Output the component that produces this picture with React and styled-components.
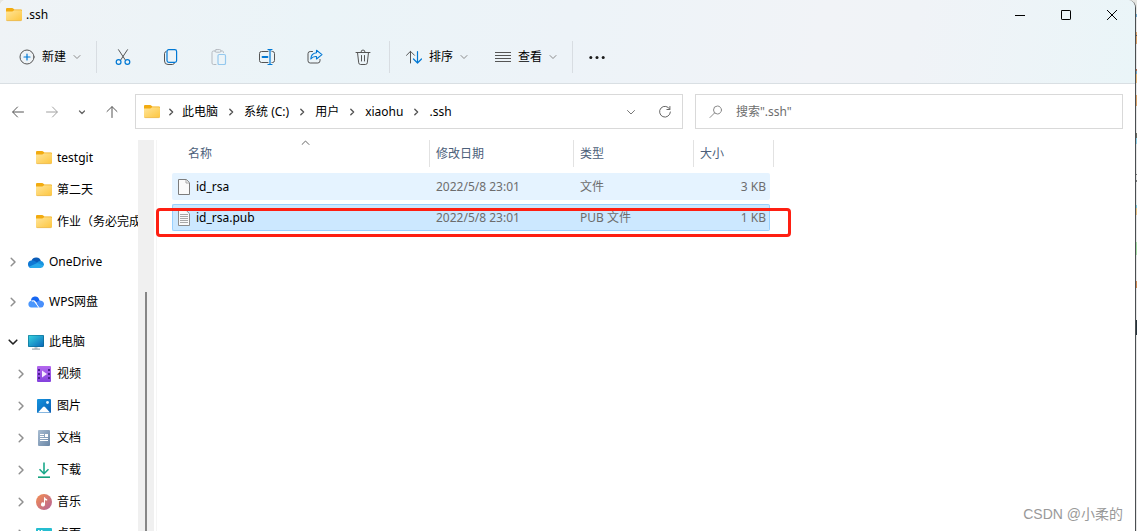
import React from 'react';
import styled, { createGlobalStyle, css, ThemeProvider } from 'styled-components';

const theme = {
  accent: '#0078d4',
  text: '#000000',
  muted: '#6d6d6d',
  header: '#4c607a',
  line: '#d9d9d9',
  hover: '#e5f3ff',
  selected: '#cce8ff',
  selectedLine: '#99d1ff',
  mark: '#fe1f12',
};

const GlobalStyle = createGlobalStyle`
    *, *::before, *::after {
        box-sizing: border-box;
    }

    body {
        margin: 0;
        overflow: hidden;
        font-family: 'Noto Sans', 'Noto Sans CJK SC', sans-serif;
        font-size: 12px;
        line-height: 16px;
    }

    button, input {
        font: inherit;
        color: inherit;
    }

    svg {
        flex: none;
    }
`;

const Desktop = styled.div`
    height: 100vh;
    padding-right: 1px;
    background: linear-gradient(
        #e6e6e2 0 14px, #6fa8cc 14px 17px, #e6e6e6 17px 32px, #d9a066 32px 35px,
        #5a5a5a 35px 36px, #d9a066 36px 44px, #e6e6e6 44px 69px, #b06a50 69px 71px,
        #6fa8cc 71px 74px, #e8b878 74px 83px, #e6e6e6 83px 95px, #d9a066 95px 106px,
        #e6e6e6 106px 133px, #6a6a60 133px 138px, #8ccfe8 138px 144px, #e6e6e6 144px 174px,
        #777777 174px 175px, #e6e6e6 175px 180px, #777777 180px 182px, #e6e6e6 182px 205px,
        #7cc8d8 205px 208px, #e8c080 208px 215px, #e6e6e6 215px 242px, #a4dca4 242px 255px,
        #e6e6e6 255px 281px, #d08850 281px 288px, #e6e6e6 288px 320px, #26323a 320px 335px,
        #e6e6e6 335px
    );
`;

const Window = styled.div`
    position: relative;
    display: flex;
    flex-direction: column;
    height: 100%;
    overflow: hidden;
    background: white;
    border-right: 1px solid #4b4f52;
    border-radius: 6px 8px 0 0;
    color: ${({theme}) => theme.text};
`;

const Header = styled.header`
    flex: none;
    background: linear-gradient(100deg, #eff3f6 0%, #ebf4f8 28%, #edf3f8 50%, #f1f3f7 72%, #f0f3f7 80%, #eaf5f8 100%);
    border-bottom: 1px solid #d9dfe3;
`;

const TitleBar = styled.div`
    display: flex;
    align-items: center;
    height: 29px;
    padding-left: 6px;
`;

const Title = styled.h1`
    flex: 1;
    margin: 0 0 0 4px;
    font-size: 12px;
    font-weight: 400;
`;

const BareButton = styled.button`
    display: flex;
    align-items: center;
    justify-content: center;
    padding: 0;
    border: 0;
    background: none;
`;

const WindowButton = styled(BareButton)`
    width: 46px;
    height: 29px;
`;

const Toolbar = styled.div`
    display: flex;
    align-items: center;
    height: 54px;
    padding: 2px 0 0 5px;
`;

const LabelButton = styled(BareButton)`
    gap: 7px;
    height: 32px;
    padding: 0 13px 0 14px;
`;

const IconButton = styled(BareButton)`
    width: ${({narrow}) => narrow ? '44px' : '48px'};
    height: 32px;
`;

const Divider = styled.span`
    width: 1px;
    height: 32px;
    margin: 0 2px;
    background: #d8dde2;
`;

const NavBar = styled.nav`
    display: flex;
    flex: none;
    padding: 10px 12px 10px 1px;
`;

const NavButton = styled(BareButton)`
    width: ${({small}) => small ? '26px' : '34px'};
    height: 35px;
`;

const Fields = styled.div`
    display: grid;
    flex: 1;
    grid-template-columns: minmax(0, 1.28fr) minmax(0, 1fr);
    gap: 12px;
    margin-left: 6px;
`;

const field = css`
    display: flex;
    align-items: center;
    height: 35px;
    border: 1px solid ${({theme}) => theme.line};
`;

const AddressBar = styled.div`
    ${field}
    padding-left: 8px;
`;

const FieldButton = styled(BareButton)`
    width: 34px;
    height: 33px;
`;

const Crumbs = styled.ol`
    display: flex;
    flex: 1;
    margin: 0;
    padding: 0;
    overflow: hidden;
    list-style: none;
    white-space: nowrap;
`;

const Crumb = styled.li`
    display: flex;
    align-items: center;

    svg {
        width: 26px;
    }

    &:first-child svg {
        width: 22px;
    }

    a {
        color: inherit;
        text-decoration: none;
    }
`;

const SearchBox = styled.label`
    ${field}
    gap: 13px;
    padding-left: 13px;
`;

const SearchInput = styled.input`
    flex: 1;
    min-width: 0;
    padding: 0;
    border: 0;
    outline: 0;
    background: none;

    &::placeholder {
        color: ${({theme}) => theme.muted};
        opacity: 1;
    }
`;

const Body = styled.div`
    display: flex;
    flex: 1;
    min-height: 0;
    padding-top: 1px;
`;

const Sidebar = styled.aside`
    display: flex;
    flex: 0 0 154px;
    overflow: hidden;
`;

const Tree = styled.ul`
    flex: 1;
    min-width: 0;
    margin: 0;
    padding: 2px 0 0;
    overflow: hidden;
    list-style: none;
`;

const TreeItem = styled.li`
    margin-top: ${({spaced}) => spaced ? '8px' : '0'};
`;

const TreeLink = styled.a`
    display: flex;
    align-items: center;
    height: 32px;
    padding-left: ${({nested}) => nested ? '12px' : '4px'};
    color: inherit;
    text-decoration: none;
    white-space: nowrap;
`;

const TreeArrow = styled.span`
    display: flex;
    flex: none;
    justify-content: center;
    width: 17px;
    margin-right: 7px;
`;

const TreeLabel = styled.span`
    margin-left: 5px;
`;

const ScrollTrack = styled.div`
    flex: none;
    width: 16px;
    padding: 152px 7px 0;
    background: #f0f0f0;
`;

const ScrollThumb = styled.div`
    width: 2px;
    height: 100%;
    background: #868686;
`;

const Content = styled.main`
    flex: 1;
    margin-left: 2px;
    border-left: 1px solid #f5f5f5;
`;

const TableArea = styled.div`
    position: relative;
    width: max-content;
    margin: -4px 0 0 15px;
`;

const FileTable = styled.table`
    width: 602px;
    table-layout: fixed;
    border-spacing: 0 4px;
`;

const HeadCell = styled.th`
    position: relative;
    padding: 0 0 2px;
    color: ${({theme}) => theme.header};
    font-weight: 400;
    text-align: left;
`;

const HeadLabel = styled.div`
    height: 27px;
    padding: 6px 0 0 ${({first}) => first ? '16px' : '6px'};
    border-right: 1px solid #e2e2e2;
`;

const SortMark = styled.span`
    position: absolute;
    top: 0;
    left: 50%;
    display: flex;
`;

const Cell = styled.td`
    height: 27px;
    padding: 0 4px 0 6px;
    border: 1px solid transparent;
    border-width: 1px 0;
    background: ${({theme}) => theme.hover};
    color: ${({theme}) => theme.muted};
    text-align: ${({right}) => right ? 'right' : 'left'};

    &:first-child {
        border-left-width: 1px;
        border-radius: 2px 0 0 2px;
        padding-left: 5px;
        color: ${({theme}) => theme.text};
    }

    &:last-child {
        border-right-width: 1px;
        border-radius: 0 2px 2px 0;
        padding-right: 3px;
    }

    ${({selected}) =>
        selected && css`
            background: ${({theme}) => theme.selected};
            border-color: ${({theme}) => theme.selectedLine};
        `}
`;

const FileName = styled.span`
    display: flex;
    align-items: center;
    gap: 6px;
`;

const Highlight = styled.div`
    position: absolute;
    top: 72px;
    left: -16px;
    right: -17px;
    height: 29px;
    border: 3px solid ${({theme}) => theme.mark};
    border-radius: 4px;
    pointer-events: none;
`;

const Watermark = styled.span`
    position: absolute;
    right: 12px;
    bottom: 7px;
    color: #999999;
    font-family: 'Liberation Sans', 'Noto Sans CJK SC', sans-serif;
    font-size: 14px;
    line-height: 20px;
`;

const Line = ({ size = 16, width = size, color = '#555', children, ...rest }) => (
    <svg width={width} height={size} viewBox={`0 0 ${width} ${size}`} fill="none" stroke={color}
        strokeLinecap="round" strokeLinejoin="round" aria-hidden="true" {...rest}>
        {children}
    </svg>
);

const ChevronDown = ({ color = '#8a8a8a', weight = 1 }) => (
    <Line size={8} color={color} strokeWidth={weight}><path d="M1 2.5 4 5.5 7 2.5"/></Line>
);

const ChevronRight = ({ color = '#909090', weight = 1.5 }) => (
    <Line size={10} color={color} strokeWidth={weight}><path d="M3.2 1.2 7 5 3.2 8.8"/></Line>
);

const CrumbArrow = () => (
    <Line size={8} color="#555" strokeWidth="1.4"><path d="M2.8 1.2 5.6 4 2.8 6.8"/></Line>
);

const Folder = () => (
    <svg width="16" height="14" viewBox="0 0 16 14" aria-hidden="true">
        <defs>
            <linearGradient id="folder" x1="0" y1="0" x2="1" y2="1">
                <stop offset="0" stopColor="#ffe59a"/>
                <stop offset="1" stopColor="#fdc63f"/>
            </linearGradient>
        </defs>
        <path d="M0 1Q0 0 1 0h5.200q.6 0 1 .5L8.400 1.500H15q1 0 1 1V6H0z" fill="#f2ab10"/>
        <path d="M0 3.500h6.200q.6 0 1-.4l.8-.8h7q1 0 1 1v8.200q0 1-1 1H1q-1 0-1-1z" fill="url(#folder)"/>
        <path d="M.3 12.200q.3.400.8.400h13.800q.5 0 .8-.4" stroke="#e9ac28" strokeWidth=".7" fill="none"/>
    </svg>
);

const OneDrive = () => (
    <svg width="16" height="11" viewBox="0 0 16 11" aria-hidden="true">
        <path d="M3.500 3.600A5 5 0 0 1 13 4.200L9 8z" fill="#0a5cb8"/>
        <path d="M3.600 3.400a3.700 3.700 0 0 1 3 .6l5.800 3.400L4 11A3.800 3.800 0 0 1 3.600 3.400z" fill="#0f78d4"/>
        <path d="M9 5.600a3.900 3.900 0 0 1 4-1.500 3.500 3.500 0 0 1 2.800 4.500l-4 .4z" fill="#1793e0"/>
        <path d="M1 9.700 9.200 5.900l6.600 2.700A3.300 3.300 0 0 1 12.700 11H4A3.800 3.800 0 0 1 1 9.700z" fill="#28a8ea"/>
    </svg>
);

const WpsCloud = () => (
    <svg width="16" height="12" viewBox="0 0 16 12" aria-hidden="true">
        <path d="M3 4.600A4.200 4.200 0 0 1 11.200 3.500L12 5.500 9.500 7.600 6.600 4.400z" fill="#1767f2"/>
        <path d="M3.200 4.700Q5.200 4.100 6.400 5.800L10.500 11.600H3.400A3.500 3.500 0 0 1 3.200 4.700z" fill="#4a96fc"/>
        <path d="M9.600 5.300q2.200-1.500 4.400-.3a3.500 3.500 0 0 1-.8 6.600H11L8.400 8z" fill="#4a90fb"/>
        <path d="M3.800 5.200Q5.600 4.300 7 6L10.800 11.400" fill="none" stroke="#ffffff" strokeWidth=".9"/>
    </svg>
);

const Computer = () => (
    <svg width="16" height="16" viewBox="0 0 16 16" aria-hidden="true">
        <defs>
            <linearGradient id="screen" x1="0" y1="0" x2="1" y2="1">
                <stop offset="0" stopColor="#36d3df"/>
                <stop offset="1" stopColor="#0b67ba"/>
            </linearGradient>
        </defs>
        <path d="M6.500 12h3v3h-3z" fill="#c3cad0"/>
        <path d="M4 14.600h8v1H4z" fill="#8d989f"/>
        <rect y="1" width="16" height="12" rx="1" fill="#0a6789"/>
        <rect x=".6" y="1.600" width="14.800" height="10.800" rx=".5" fill="url(#screen)"/>
    </svg>
);

const Video = () => (
    <svg width="16" height="16" viewBox="0 0 16 16" aria-hidden="true">
        <defs>
            <linearGradient id="video" x1="0" y1="0" x2="0" y2="1">
                <stop offset="0" stopColor="#b468ee"/>
                <stop offset="1" stopColor="#8341dd"/>
            </linearGradient>
        </defs>
        <rect x="1" width="14" height="16" rx="1" fill="url(#video)"/>
        <path d="M2 3h2v2H2zM2 7h2v2H2zM2 11h2v2H2zM12 3h2v2h-2zM12 7h2v2h-2zM12 11h2v2h-2z" fill="#4b2190"/>
        <path d="M6 4.500v7l5-3.500z" fill="#f5ecff"/>
    </svg>
);

const Picture = () => (
    <svg width="16" height="16" viewBox="0 0 16 16" aria-hidden="true">
        <defs>
            <linearGradient id="picture" x1="0" y1="0" x2="1" y2="1">
                <stop offset="0" stopColor="#1494df"/>
                <stop offset="1" stopColor="#0c5fb4"/>
            </linearGradient>
        </defs>
        <rect x="1" y="1" width="14" height="14" rx="1" fill="url(#picture)"/>
        <path d="M2 14.500 7 9q1-1 2 0l5 5.500z" fill="#ffffff"/>
        <circle cx="11.500" cy="4.500" r="1.400" fill="#e5f5ff"/>
    </svg>
);

const Document = () => (
    <svg width="16" height="16" viewBox="0 0 16 16" aria-hidden="true">
        <defs>
            <linearGradient id="document" x1="0" y1="0" x2="1" y2="1">
                <stop offset="0" stopColor="#a9bdd2"/>
                <stop offset="1" stopColor="#6986a6"/>
            </linearGradient>
        </defs>
        <rect x="2" width="12" height="16" rx="1" fill="url(#document)"/>
        <path d="M4 4.500h4M4 6.500h4M4 8.500h8M4 10.500h8" stroke="#ffffff"/>
        <rect x="9" y="4" width="3" height="3" fill="#ffffff"/>
    </svg>
);

const Download = () => (
    <svg width="16" height="16" viewBox="0 0 16 16" fill="none" stroke="#1aa98a" strokeWidth="1.6" aria-hidden="true">
        <path d="M8 .5v11M3.500 7.200 8 11.700l4.500-4.500"/>
        <path d="M2 15.200h12" stroke="#15a27e"/>
    </svg>
);

const Music = () => (
    <svg width="16" height="16" viewBox="0 0 16 16" aria-hidden="true">
        <defs>
            <linearGradient id="music" x1="0" y1="0" x2="1" y2="1">
                <stop offset=".1" stopColor="#ee8a57"/>
                <stop offset="1" stopColor="#b3629b"/>
            </linearGradient>
        </defs>
        <circle cx="8" cy="8" r="8" fill="url(#music)"/>
        <path d="M8 3.200h.9q.2 1.700 2.300 2v1.400Q9.700 6.500 9 5.900v4.600a2 2 0 1 1-1-1.800z" fill="#ffffff"/>
    </svg>
);

const DesktopIcon = () => (
    <svg width="16" height="16" viewBox="0 0 16 16" aria-hidden="true">
        <rect y="2" width="16" height="13" rx="1" fill="#25bdd0"/>
        <path d="M2 4.500h1.500M5 4.500h1.500M2 7.500h1.500" stroke="#ffffff"/>
    </svg>
);

const BlankFile = () => (
    <svg width="12" height="16" viewBox="0 0 12 16" aria-hidden="true">
        <path d="M.5.500h7.800L11.500 3.700v11.800H.5z" fill="#fafafa" stroke="#7c7c7c"/>
        <path d="M8 .8v3.200h3.200" fill="none" stroke="#a8a8a8"/>
    </svg>
);

const TextFile = () => (
    <svg width="12" height="16" viewBox="0 0 12 16" aria-hidden="true">
        <path d="M.5.500h7.800L11.500 3.700v11.800H.5z" fill="#fafafa" stroke="#8c8c8c"/>
        <path d="M2 4.500h8M2 6.500h8M2 8.500h8M2 10.500h8M2 12.500h8" stroke="#a8a8a8"/>
    </svg>
);

const crumbs = ['此电脑', '系统 (C:)', '用户', 'xiaohu', '.ssh'];

const tree = [
    { label: 'testgit', icon: Folder, nested: true },
    { label: '第二天', icon: Folder, nested: true },
    { label: '作业（务必完成', icon: Folder, nested: true },
    { label: 'OneDrive', icon: OneDrive, arrow: 'right', spaced: true },
    { label: 'WPS网盘', icon: WpsCloud, arrow: 'right', spaced: true },
    { label: '此电脑', icon: Computer, arrow: 'down', spaced: true },
    { label: '视频', icon: Video, arrow: 'right', nested: true },
    { label: '图片', icon: Picture, arrow: 'right', nested: true },
    { label: '文档', icon: Document, arrow: 'right', nested: true },
    { label: '下载', icon: Download, arrow: 'right', nested: true },
    { label: '音乐', icon: Music, arrow: 'right', nested: true },
    { label: '桌面', icon: DesktopIcon, arrow: 'right', nested: true },
];

const files = [
    { name: 'id_rsa', date: '2022/5/8 23:01', type: '文件', size: '3 KB', icon: BlankFile },
    { name: 'id_rsa.pub', date: '2022/5/8 23:01', type: 'PUB 文件', size: '1 KB', icon: TextFile, selected: true },
];

const CommandBar = () => (
    <Toolbar>
        <LabelButton>
            <Line>
                <circle cx="8" cy="8" r="7"/>
                <path d="M8 5v6M5 8h6" stroke={theme.accent} strokeWidth="1.2"/>
            </Line>
            新建
            <ChevronDown/>
        </LabelButton>
        <Divider/>
        <IconButton aria-label="剪切">
            <Line>
                <path d="M3.500.7 10.300 11M12.500.7 5.700 11"/>
                <circle cx="3.600" cy="13" r="2.400" stroke={theme.accent} strokeWidth="1.2"/>
                <circle cx="12.400" cy="13" r="2.400" stroke={theme.accent} strokeWidth="1.2"/>
            </Line>
        </IconButton>
        <IconButton aria-label="复制">
            <Line>
                <path d="M3 2.500Q1.500 3 1.500 4.500V12q0 3.500 3.500 3.500h4.500q1.500 0 2-1.500"/>
                <rect x="4" y=".6" width="9.600" height="12.800" rx="1.800" stroke={theme.accent} strokeWidth="1.2"/>
            </Line>
        </IconButton>
        <IconButton aria-label="粘贴" disabled>
            <Line color="#b5bac0">
                <path d="M5 15.500H2.500q-1.500 0-1.500-1.500V3.500Q1 2 2.500 2H4M10 2h1.500q1 0 1 1.500"/>
                <rect x="4" y=".6" width="6" height="2.600" rx="1.300"/>
                <rect x="7" y="5.500" width="7.500" height="10" rx="1.300" stroke="#94c8ee" strokeWidth="1.200"/>
            </Line>
        </IconButton>
        <IconButton aria-label="重命名">
            <Line>
                <path d="M9 2.500H2.500Q.5 2.500.5 4.500v7q0 2 2 2H9M13 2.500h.5q2 0 2 2v7q0 2-2 2H13"/>
                <path d="M3.500 8h5" stroke={theme.accent} strokeWidth="1.800"/>
                <path d="M11 .8v14.600M9 .6h4M9 15.500h4" stroke={theme.accent} strokeWidth="1.200"/>
            </Line>
        </IconButton>
        <IconButton aria-label="共享">
            <Line>
                <path d="M5.500 2.500H3.200Q1 2.500 1 4.700v7.100Q1 14 3.200 14h7.600q2.200 0 2.200-2.200V10.500"/>
                <path d="M9.500 1.200 15 5.600 9.500 10V7.600Q6 7.200 3.800 10 4 4.400 9.500 3.800z" stroke={theme.accent} strokeWidth="1.100"/>
            </Line>
        </IconButton>
        <IconButton aria-label="删除">
            <Line>
                <path d="M1 3.500h14M6 3Q6 1 8 1t2 2M2.500 3.500l1.200 10.300q.2 1.700 1.900 1.700h4.800q1.700 0 1.900-1.700L13.500 3.500M6.500 6.500v5.500M9.500 6.500v5.500"/>
            </Line>
        </IconButton>
        <Divider/>
        <LabelButton>
            <Line>
                <path d="M4.500 14V2.500M.5 6.300 4.500 2.300l4 4"/>
                <path d="M11.500 2.500V14M7.500 10l4 4 4-4" stroke={theme.accent} strokeWidth="1.200"/>
            </Line>
            排序
            <ChevronDown/>
        </LabelButton>
        <LabelButton>
            <Line strokeLinecap="butt">
                <path d="M0 3.500h16M0 6.500h16M0 9.500h16M0 12.500h16"/>
            </Line>
            查看
            <ChevronDown/>
        </LabelButton>
        <Divider/>
        <IconButton narrow aria-label="更多">
            <svg width="16" height="16" viewBox="0 0 16 16" fill="#1a1a1a" aria-hidden="true">
                <circle cx="1.800" cy="8.500" r="1.500"/>
                <circle cx="8" cy="8.500" r="1.500"/>
                <circle cx="14.200" cy="8.500" r="1.500"/>
            </svg>
        </IconButton>
    </Toolbar>
);

const Navigation = () => (
    <NavBar>
        <NavButton aria-label="后退">
            <Line size={12} color="#555"><path d="M11.500 6H1M5.500 1 .6 6l4.900 5"/></Line>
        </NavButton>
        <NavButton aria-label="前进">
            <Line size={12} color="#a0a0a0"><path d="M.5 6H11M6.500 1l4.900 5-4.900 5"/></Line>
        </NavButton>
        <NavButton small aria-label="最近浏览的位置">
            <Line size={8} color="#666" strokeWidth="1.300"><path d="M1.500 3 4 5.500 6.500 3"/></Line>
        </NavButton>
        <NavButton aria-label="向上">
            <Line size={12} color="#555"><path d="M6 11.500V1M1 5.500 6 .6l5 4.900"/></Line>
        </NavButton>
        <Fields>
            <AddressBar>
                <Folder/>
                <Crumbs>
                    {crumbs.map(crumb => (
                        <Crumb key={crumb}>
                            <CrumbArrow/>
                            <a href="#">{crumb}</a>
                        </Crumb>
                    ))}
                </Crumbs>
                <FieldButton aria-label="以前的位置">
                    <Line size={10} color="#777"><path d="M1.500 3.500 5 7l3.500-3.500"/></Line>
                </FieldButton>
                <FieldButton aria-label="刷新">
                    <Line size={14} color="#666">
                        <path d="M11.800 4.200A5.400 5.400 0 1 0 12.400 7M11.900 1.500v3H8.900"/>
                    </Line>
                </FieldButton>
            </AddressBar>
            <SearchBox>
                <Line size={14} color="#8a8a8a"><circle cx="8.500" cy="5" r="4"/><path d="M5.600 7.900 1 12.500"/></Line>
                <SearchInput type="text" aria-label="搜索" placeholder={'搜索".ssh"'}/>
            </SearchBox>
        </Fields>
    </NavBar>
);

const TreePane = () => (
    <Sidebar>
        <Tree>
            {tree.map(({ label, icon: Icon, arrow, nested, spaced }) => (
                <TreeItem key={label} spaced={spaced}>
                    <TreeLink href="#" nested={nested}>
                        <TreeArrow>
                            {arrow === 'right' && <ChevronRight/>}
                            {arrow === 'down' && (
                                <Line size={10} color="#222" strokeWidth="1.600"><path d="M1.200 3.200 5 7 8.800 3.200"/></Line>
                            )}
                        </TreeArrow>
                        <Icon/>
                        <TreeLabel>{label}</TreeLabel>
                    </TreeLink>
                </TreeItem>
            ))}
        </Tree>
        <ScrollTrack><ScrollThumb/></ScrollTrack>
    </Sidebar>
);

const FileList = () => (
    <Content>
        <TableArea>
            <FileTable>
                <colgroup>
                    <col width="258"/>
                    <col width="144"/>
                    <col width="120"/>
                    <col width="76"/>
                    <col width="4"/>
                </colgroup>
                <thead>
                    <tr>
                        <HeadCell aria-sort="ascending">
                            <SortMark>
                                <Line size={5} width={9} color="#666"><path d="M1 4.500 4.500 1 8 4.500"/></Line>
                            </SortMark>
                            <HeadLabel first>名称</HeadLabel>
                        </HeadCell>
                        <HeadCell><HeadLabel>修改日期</HeadLabel></HeadCell>
                        <HeadCell><HeadLabel>类型</HeadLabel></HeadCell>
                        <HeadCell colSpan={2}><HeadLabel>大小</HeadLabel></HeadCell>
                    </tr>
                </thead>
                <tbody>
                    {files.map(({ name, date, type, size, icon: Icon, selected }) => (
                        <tr key={name}>
                            <Cell selected={selected}><FileName><Icon/>{name}</FileName></Cell>
                            <Cell selected={selected}>{date}</Cell>
                            <Cell selected={selected}>{type}</Cell>
                            <Cell selected={selected} right>{size}</Cell>
                        </tr>
                    ))}
                </tbody>
            </FileTable>
            <Highlight/>
        </TableArea>
    </Content>
);

const App = () => (
    <ThemeProvider theme={theme}>
        <GlobalStyle/>
        <Desktop>
            <Window>
                <Header>
                    <TitleBar>
                        <Folder/>
                        <Title>.ssh</Title>
                        <WindowButton aria-label="最小化">
                            <Line size={10} color="#000"><path d="M0 5.500h10"/></Line>
                        </WindowButton>
                        <WindowButton aria-label="最大化">
                            <Line size={10} color="#000"><rect x=".5" y=".5" width="9" height="9" rx=".6"/></Line>
                        </WindowButton>
                        <WindowButton aria-label="关闭">
                            <Line size={10} color="#000"><path d="M.3.300l9.400 9.400M9.700.3.300 9.700"/></Line>
                        </WindowButton>
                    </TitleBar>
                    <CommandBar/>
                </Header>
                <Navigation/>
                <Body>
                    <TreePane/>
                    <FileList/>
                </Body>
                <Watermark>CSDN @小柔的</Watermark>
            </Window>
        </Desktop>
    </ThemeProvider>
);

export default App;
